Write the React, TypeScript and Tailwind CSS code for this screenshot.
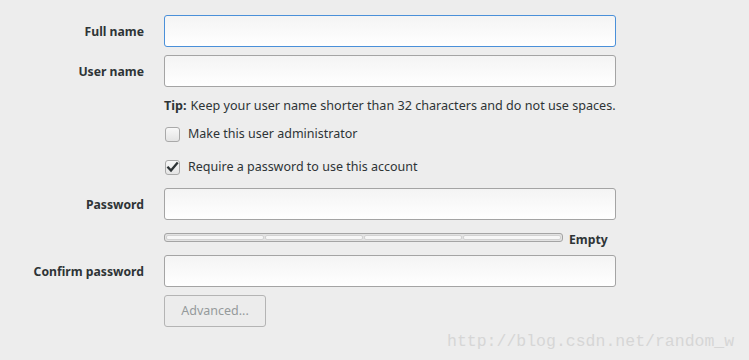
import React from "react";

const font = { fontFamily: '"Noto Sans", "DejaVu Sans", sans-serif' };

function Label({ children }: { children: React.ReactNode }) {
  return (
    <div className="mt-[2px] w-[144px] shrink-0 text-right text-[12.2px] font-bold text-[#2e3436] leading-[18px]">
      {children}
    </div>
  );
}

function Input({ focused = false }: { focused?: boolean }) {
  return (
    <div
      className={
        "h-[32px] w-[452px] rounded-[3px] border bg-gradient-to-b from-[#f4f4f4] to-white " +
        (focused ? "border-[#4a90d9]" : "border-[#a4a4a4]")
      }
    />
  );
}

function Checkbox({ checked = false }: { checked?: boolean }) {
  return (
    <div className="flex h-[15px] w-[15px] items-center justify-center rounded-[3px] border border-[#a9a9a9] bg-gradient-to-b from-[#f8f8f8] to-[#e4e4e4]">
      {checked && (
        <svg width="13" height="13" viewBox="0 0 13 13">
          <path d="M2.2 6.6 L5 9.6 L11 2.4" fill="none" stroke="#2e3436" strokeWidth="2.3" strokeLinecap="square" />
        </svg>
      )}
    </div>
  );
}

export default function App() {
  return (
    <div className="relative h-[360px] w-[749px] overflow-hidden bg-[#ededed] text-[#2e3436]" style={font}>
      <div className="flex flex-col pt-[15px]">
        <div className="flex items-center gap-[20px]">
          <Label>Full name</Label>
          <Input focused />
        </div>
        <div className="mt-[8px] flex items-center gap-[20px]">
          <Label>User name</Label>
          <Input />
        </div>
        <div className="mt-[10px] flex h-[18px] items-center pl-[164px] text-[12.6px] leading-[18px]">
          <span className="font-bold">Tip:</span>
          <span className="ml-[4px]">Keep your user name shorter than 32 characters and do not use spaces.</span>
        </div>
        <div className="mt-[10px] flex h-[18px] items-center gap-[8px] pl-[165px] text-[12.5px]">
          <Checkbox />
          <span className="mt-[1px]">Make this user administrator</span>
        </div>
        <div className="mt-[15px] flex h-[18px] items-center gap-[8px] pl-[165px] text-[12.5px]">
          <Checkbox checked />
          <span className="mt-[1px]">Require a password to use this account</span>
        </div>
        <div className="mt-[12px] flex items-center gap-[20px]">
          <Label>Password</Label>
          <Input />
        </div>
        <div className="mt-[10px] flex h-[18px] items-start pl-[164px]">
          <div className="mt-[3px] flex h-[9px] w-[399px] gap-[1px] rounded-[3px] border border-[#a4a4a4] bg-[#e2e2e2] p-[1px]">
            <div className="h-full flex-1 rounded-[2px] border border-[#d2d2d2] bg-[#f7f7f7]" />
            <div className="h-full flex-1 rounded-[2px] border border-[#d2d2d2] bg-[#f7f7f7]" />
            <div className="h-full flex-1 rounded-[2px] border border-[#d2d2d2] bg-[#f7f7f7]" />
            <div className="h-full flex-1 rounded-[2px] border border-[#d2d2d2] bg-[#f7f7f7]" />
          </div>
          <span className="ml-[6px] mt-[1px] text-[12.2px] font-bold leading-[18px]">Empty</span>
        </div>
        <div className="mt-[7px] flex items-center gap-[20px]">
          <Label>Confirm password</Label>
          <Input />
        </div>
        <div className="mt-[8px] pl-[164px]">
          <div className="flex h-[32px] w-[102px] items-center justify-center rounded-[3px] border border-[#b4b4b4] bg-[#ececec] pt-[1px] text-[12.5px] text-[#959a9b]">
            Advanced...
          </div>
        </div>
      </div>
      <div
        className="absolute left-[447px] top-[330px] text-[16.5px] leading-[24px] text-[#d6d6d6]"
        style={{ fontFamily: '"Liberation Mono", monospace' }}
      >
        http://blog.csdn.net/random_w
      </div>
    </div>
  );
}
